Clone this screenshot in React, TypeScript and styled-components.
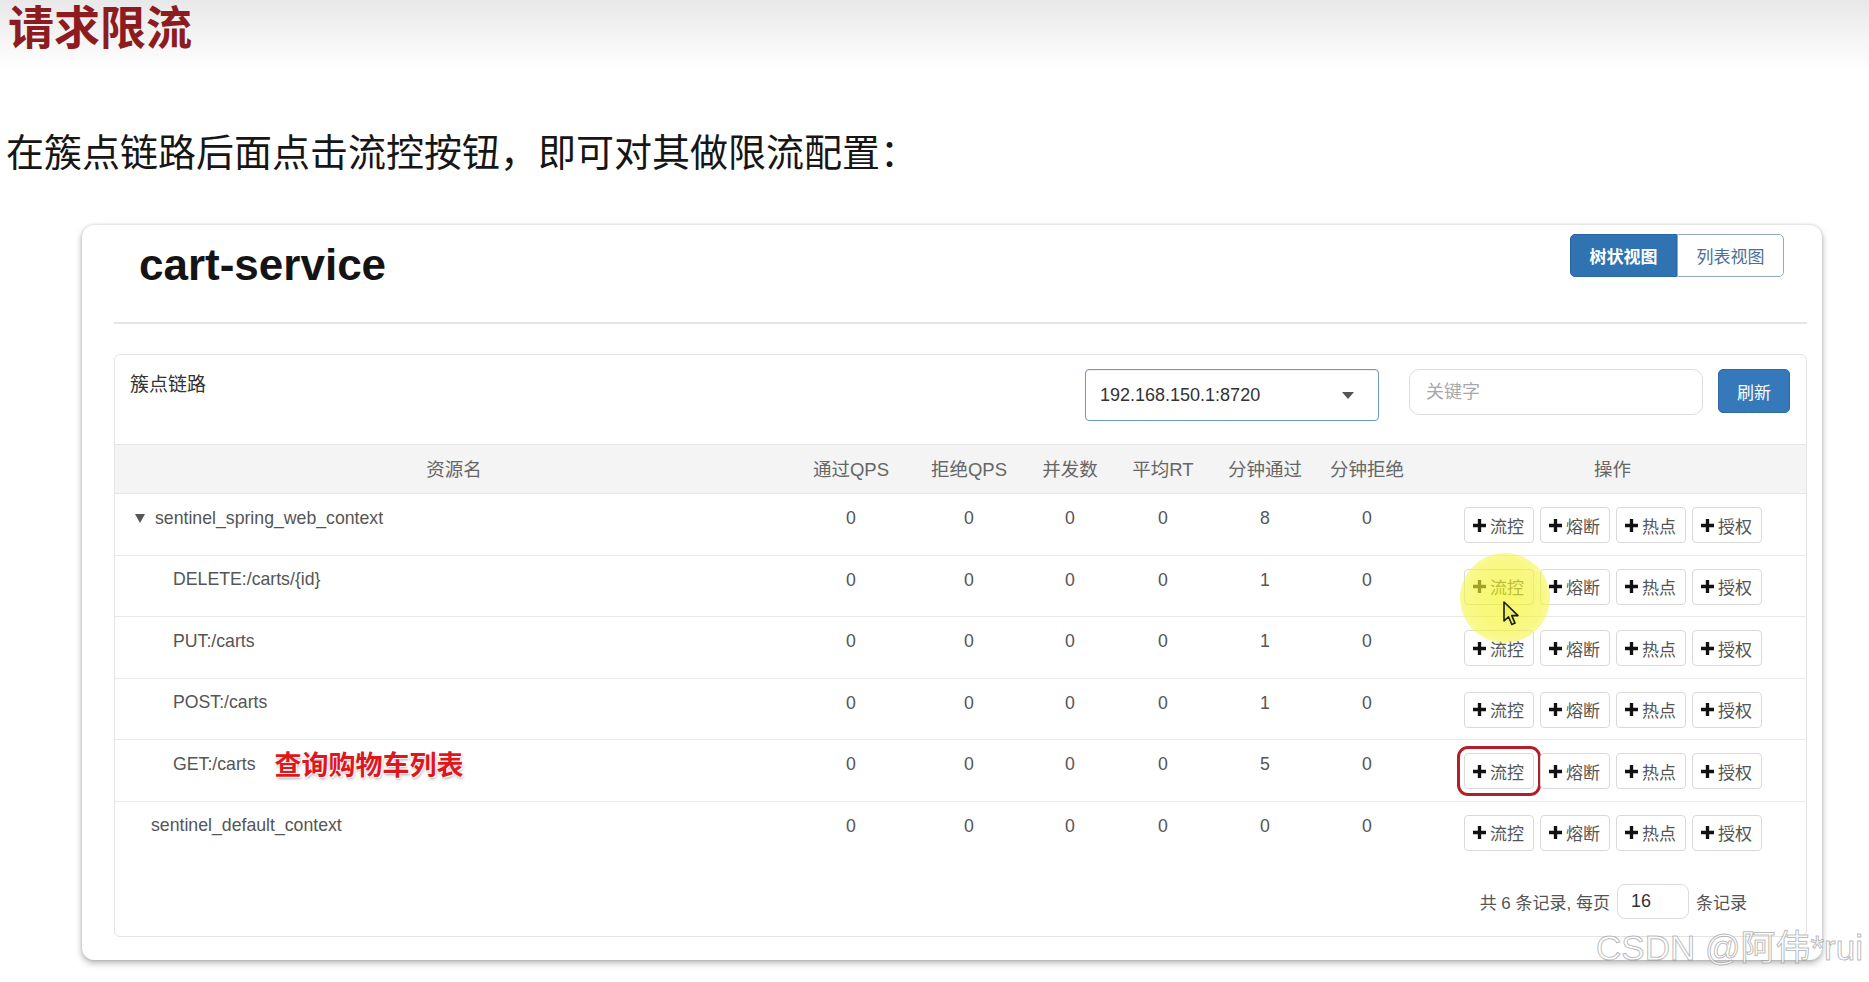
import React from 'react';
import styled, { createGlobalStyle } from 'styled-components';

const GlobalStyle = createGlobalStyle`
  html, body {
    margin: 0;
    padding: 0;
  }
  body {
    background: linear-gradient(#e8e8e8 0px, #f4f4f4 36px, #ffffff 72px);
    font-family: "Liberation Sans", "Noto Sans CJK SC", sans-serif;
    overflow: hidden;
  }
`;

type RowLevel = 'root' | 'child' | 'plain';

type ResourceRow = {
  name: string;
  level: RowLevel;
  values: number[];
  note?: string;
  outlined?: boolean;
};

const headers = ['资源名', '通过QPS', '拒绝QPS', '并发数', '平均RT', '分钟通过', '分钟拒绝', '操作'];

const rows: ResourceRow[] = [
  { name: 'sentinel_spring_web_context', level: 'root', values: [0, 0, 0, 0, 8, 0] },
  { name: 'DELETE:/carts/{id}', level: 'child', values: [0, 0, 0, 0, 1, 0] },
  { name: 'PUT:/carts', level: 'child', values: [0, 0, 0, 0, 1, 0] },
  { name: 'POST:/carts', level: 'child', values: [0, 0, 0, 0, 1, 0] },
  { name: 'GET:/carts', level: 'child', values: [0, 0, 0, 0, 5, 0], note: '查询购物车列表', outlined: true },
  { name: 'sentinel_default_context', level: 'plain', values: [0, 0, 0, 0, 0, 0] }
];

const actions = ['流控', '熔断', '热点', '授权'];

const PlusIcon = () => (
  <svg width="13" height="13" viewBox="0 0 14 14">
    <path d="M5.2 0h3.6v5.2H14v3.6H8.8V14H5.2V8.8H0V5.2h5.2z" fill="#111" />
  </svg>
);

const Caret = () => (
  <svg width="12" height="7" viewBox="0 0 12 7">
    <path d="M0 0h12L6 7z" fill="#555" />
  </svg>
);

const Pointer = () => (
  <svg width="20" height="26" viewBox="0 0 20 26">
    <path
      d="M2 1 L2 20 L6.5 15.8 L9.8 23.5 L13 22.1 L9.8 14.6 L16 14.6 Z"
      fill="#eef06a"
      stroke="#1c1c10"
      strokeWidth="1.6"
      strokeLinejoin="round"
    />
  </svg>
);

export default function App() {
  return (
    <Page>
      <GlobalStyle />
      <SlideTitle>请求限流</SlideTitle>
      <SlideText>在簇点链路后面点击流控按钮，即可对其做限流配置：</SlideText>

      <Card>
        <CardHeader>
          <ServiceName>cart-service</ServiceName>
          <ViewToggle>
            <ToggleButton $active>树状视图</ToggleButton>
            <ToggleButton>列表视图</ToggleButton>
          </ViewToggle>
        </CardHeader>

        <Panel>
          <PanelHeader>
            <PanelTitle>簇点链路</PanelTitle>
            <Controls>
              <MachineSelect>
                <span>192.168.150.1:8720</span>
                <Caret />
              </MachineSelect>
              <KeywordInput placeholder="关键字" readOnly />
              <RefreshButton>刷新</RefreshButton>
            </Controls>
          </PanelHeader>

          <HeadRow>
            {headers.map((h) => (
              <HeadCell key={h}>{h}</HeadCell>
            ))}
          </HeadRow>

          {rows.map((row, i) => (
            <BodyRow key={row.name} $last={i === rows.length - 1}>
              <NameCell $level={row.level}>
                {row.level === 'root' && <TreeArrow />}
                <span>{row.name}</span>
                {row.note && <Note>{row.note}</Note>}
              </NameCell>
              {row.values.map((v, j) => (
                <NumCell key={j}>{v}</NumCell>
              ))}
              <ActionCell>
                {actions.map((a, k) => (
                  <ActionButton key={a} $outlined={row.outlined && k === 0}>
                    <PlusIcon />
                    <span>{a}</span>
                  </ActionButton>
                ))}
              </ActionCell>
            </BodyRow>
          ))}

          <Pager>
            <span>共 6 条记录, 每页</span>
            <PageSize>16</PageSize>
            <span>条记录</span>
          </Pager>
        </Panel>
      </Card>

      <Spotlight />
      <PointerWrap>
        <Pointer />
      </PointerWrap>
      <Watermark>CSDN @阿伟*rui</Watermark>
    </Page>
  );
}

const Page = styled.div`
  position: relative;
  width: 1869px;
  height: 982px;
  overflow: hidden;
`;

const SlideTitle = styled.h1`
  margin: 0;
  padding: 0 0 0 8px;
  font-family: "Noto Sans CJK SC", sans-serif;
  font-size: 46px;
  line-height: 48px;
  font-weight: 700;
  color: #8c1c20;
`;

const SlideText = styled.p`
  margin: 81px 0 0 6px;
  font-family: "Noto Sans CJK SC", sans-serif;
  font-size: 38px;
  line-height: 42px;
  color: #161616;
`;

const Card = styled.div`
  box-sizing: border-box;
  width: 1740px;
  height: 735px;
  margin: 54px 0 0 82px;
  padding: 0 15px 0 32px;
  background: #fff;
  border-radius: 12px;
  box-shadow: 0 3px 7px rgba(0, 0, 0, 0.3), 0 0 3px rgba(0, 0, 0, 0.14);
`;

const CardHeader = styled.div`
  box-sizing: border-box;
  display: flex;
  justify-content: space-between;
  align-items: flex-start;
  height: 99px;
  border-bottom: 2px solid #e6e6e6;
`;

const ServiceName = styled.div`
  margin: 16px 0 0 25px;
  font-size: 44px;
  line-height: 48px;
  font-weight: 700;
  color: #141414;
`;

const ViewToggle = styled.div`
  display: flex;
  margin: 9px 23px 0 0;
`;

const ToggleButton = styled.div<{ $active?: boolean }>`
  box-sizing: border-box;
  width: 107px;
  height: 43px;
  display: flex;
  align-items: center;
  justify-content: center;
  font-size: 17px;
  font-weight: ${(p) => (p.$active ? 700 : 400)};
  color: ${(p) => (p.$active ? '#fff' : '#4a7099')};
  background: ${(p) => (p.$active ? '#2f73b2' : '#fff')};
  border: 1px solid ${(p) => (p.$active ? '#2a66a0' : '#93a9c2')};
  border-radius: ${(p) => (p.$active ? '5px 0 0 5px' : '0 5px 5px 0')};
`;

const Panel = styled.div`
  box-sizing: border-box;
  height: 583px;
  margin-top: 30px;
  border: 1px solid #e4e4e4;
  border-radius: 6px;
`;

const PanelHeader = styled.div`
  display: flex;
  justify-content: space-between;
  align-items: flex-start;
  height: 89px;
  padding: 0 16px 0 15px;
`;

const PanelTitle = styled.div`
  margin-top: 19px;
  font-size: 19px;
  line-height: 22px;
  color: #333;
`;

const Controls = styled.div`
  display: flex;
  align-items: flex-start;
  margin-top: 14px;
`;

const MachineSelect = styled.div`
  box-sizing: border-box;
  width: 294px;
  height: 52px;
  display: flex;
  align-items: center;
  justify-content: space-between;
  padding: 0 24px 0 14px;
  border: 1px solid #6c97c6;
  border-radius: 4px;
  box-shadow: inset 0 1px 1px rgba(0, 0, 0, 0.06);
  font-size: 18px;
  color: #333;
`;

const KeywordInput = styled.input`
  box-sizing: border-box;
  width: 294px;
  height: 46px;
  margin-left: 30px;
  padding: 0 16px;
  border: 1px solid #dcdcdc;
  border-radius: 10px;
  outline: none;
  font-family: "Liberation Sans", "Noto Sans CJK SC", sans-serif;
  font-size: 18px;
  color: #333;
  &::placeholder {
    color: #a8a8a8;
  }
`;

const RefreshButton = styled.div`
  box-sizing: border-box;
  width: 72px;
  height: 44px;
  margin-left: 15px;
  display: flex;
  align-items: center;
  justify-content: center;
  background: #3579ba;
  border: 1px solid #2e6aa5;
  border-radius: 5px;
  color: #fff;
  font-size: 17px;
`;

const tableColumns = '678px 116px 120px 82px 104px 100px 104px 1fr';

const HeadRow = styled.div`
  box-sizing: border-box;
  display: grid;
  grid-template-columns: ${tableColumns};
  height: 50px;
  align-items: center;
  background: #f4f4f4;
  border-top: 1px solid #e6e6e6;
  border-bottom: 1px solid #e6e6e6;
`;

const HeadCell = styled.div`
  text-align: center;
  font-size: 18.5px;
  color: #666;
  padding-bottom: 2px;
`;

const BodyRow = styled.div<{ $last?: boolean }>`
  box-sizing: border-box;
  display: grid;
  grid-template-columns: ${tableColumns};
  align-items: start;
  height: 61.5px;
  border-bottom: ${(p) => (p.$last ? 'none' : '1px solid #e9e9e9')};
`;

const indent: Record<RowLevel, number> = { root: 20, child: 58, plain: 36 };

const NameCell = styled.div<{ $level: RowLevel }>`
  display: flex;
  align-items: center;
  height: 20px;
  margin-top: 14px;
  padding-left: ${(p) => indent[p.$level]}px;
  font-size: 17.7px;
  color: #555;
  white-space: nowrap;
`;

const TreeArrow = styled.span`
  width: 0;
  height: 0;
  margin-right: 10px;
  border-left: 5.5px solid transparent;
  border-right: 5.5px solid transparent;
  border-top: 9px solid #555;
`;

const Note = styled.span`
  margin-left: 19px;
  font-family: "Noto Sans CJK SC", sans-serif;
  font-size: 27px;
  font-weight: 700;
  line-height: 20px;
  color: #e0161f;
  text-shadow: 0 0 2px #fff, 1px 1px 0 #fff, 1px 2px 3px rgba(0, 0, 0, 0.35);
`;

const NumCell = styled.div`
  margin-top: 14px;
  line-height: 20px;
  text-align: center;
  font-size: 17.7px;
  color: #555;
`;

const ActionCell = styled.div`
  display: flex;
  justify-content: center;
  gap: 6px;
  padding-top: 13px;
`;

const ActionButton = styled.div<{ $outlined?: boolean }>`
  box-sizing: border-box;
  width: 70px;
  height: 36px;
  display: flex;
  align-items: center;
  justify-content: center;
  gap: 4px;
  background: #fff;
  border: 1px solid #d9d9d9;
  border-radius: 4px;
  font-size: 17px;
  color: #555;
  outline: ${(p) => (p.$outlined ? '3px solid #b21f2b' : 'none')};
  outline-offset: 4px;
`;

const Pager = styled.div`
  display: flex;
  justify-content: flex-end;
  align-items: center;
  margin-top: 21px;
  padding-right: 59px;
  font-size: 17px;
  color: #555;
`;

const PageSize = styled.div`
  box-sizing: border-box;
  width: 72px;
  height: 35px;
  margin: 0 7px;
  padding-left: 13px;
  display: flex;
  align-items: center;
  border: 1px solid #dcdcdc;
  border-radius: 8px;
  font-size: 18px;
  color: #333;
`;

const Spotlight = styled.div`
  position: absolute;
  left: 1460px;
  top: 553px;
  width: 90px;
  height: 90px;
  border-radius: 50%;
  background: radial-gradient(circle, rgba(244, 244, 40, 0.68) 0%, rgba(244, 244, 60, 0.62) 60%, rgba(246, 246, 90, 0.42) 85%, rgba(246, 246, 120, 0) 100%);
  pointer-events: none;
`;

const PointerWrap = styled.div`
  position: absolute;
  left: 1502px;
  top: 601px;
  line-height: 0;
`;

const Watermark = styled.div`
  position: absolute;
  right: 6px;
  bottom: 16px;
  font-family: "Liberation Sans", "Noto Sans CJK SC", sans-serif;
  font-size: 35px;
  line-height: 36px;
  color: rgba(255, 255, 255, 0.75);
  -webkit-text-stroke: 1px rgba(130, 130, 130, 0.55);
  white-space: nowrap;
`;
